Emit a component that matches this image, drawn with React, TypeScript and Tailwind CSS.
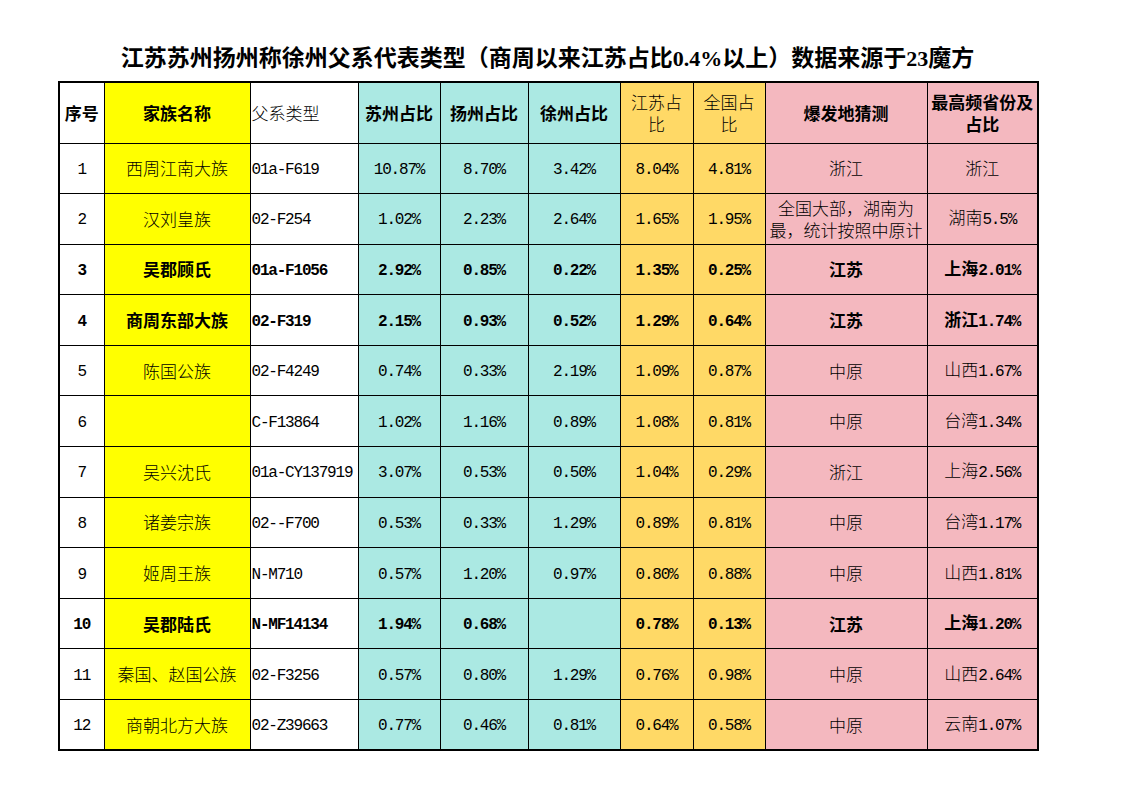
import React from "react";

type Row = {
  n: string;
  name: string;
  type: string;
  sz: string;
  yz: string;
  xz: string;
  js: string;
  qg: string;
  origin: React.ReactNode;
  top: string;
  bold?: boolean;
};

const rows: Row[] = [
  { n: "1", name: "西周江南大族", type: "01a-F619", sz: "10.87%", yz: "8.70%", xz: "3.42%", js: "8.04%", qg: "4.81%", origin: "浙江", top: "浙江" },
  {
    n: "2",
    name: "汉刘皇族",
    type: "02-F254",
    sz: "1.02%",
    yz: "2.23%",
    xz: "2.64%",
    js: "1.65%",
    qg: "1.95%",
    origin: (
      <span className="block leading-[22px]">
        全国大部，湖南为
        <br />
        最，统计按照中原计
      </span>
    ),
    top: "湖南5.5%",
  },
  { n: "3", name: "吴郡顾氏", type: "01a-F1056", sz: "2.92%", yz: "0.85%", xz: "0.22%", js: "1.35%", qg: "0.25%", origin: "江苏", top: "上海2.01%", bold: true },
  { n: "4", name: "商周东部大族", type: "02-F319", sz: "2.15%", yz: "0.93%", xz: "0.52%", js: "1.29%", qg: "0.64%", origin: "江苏", top: "浙江1.74%", bold: true },
  { n: "5", name: "陈国公族", type: "02-F4249", sz: "0.74%", yz: "0.33%", xz: "2.19%", js: "1.09%", qg: "0.87%", origin: "中原", top: "山西1.67%" },
  { n: "6", name: "", type: "C-F13864", sz: "1.02%", yz: "1.16%", xz: "0.89%", js: "1.08%", qg: "0.81%", origin: "中原", top: "台湾1.34%" },
  { n: "7", name: "吴兴沈氏", type: "01a-CY137919", sz: "3.07%", yz: "0.53%", xz: "0.50%", js: "1.04%", qg: "0.29%", origin: "浙江", top: "上海2.56%" },
  { n: "8", name: "诸姜宗族", type: "02--F700", sz: "0.53%", yz: "0.33%", xz: "1.29%", js: "0.89%", qg: "0.81%", origin: "中原", top: "台湾1.17%" },
  { n: "9", name: "姬周王族", type: "N-M710", sz: "0.57%", yz: "1.20%", xz: "0.97%", js: "0.80%", qg: "0.88%", origin: "中原", top: "山西1.81%" },
  { n: "10", name: "吴郡陆氏", type: "N-MF14134", sz: "1.94%", yz: "0.68%", xz: "", js: "0.78%", qg: "0.13%", origin: "江苏", top: "上海1.20%", bold: true },
  { n: "11", name: "秦国、赵国公族", type: "02-F3256", sz: "0.57%", yz: "0.80%", xz: "1.29%", js: "0.76%", qg: "0.98%", origin: "中原", top: "山西2.64%" },
  { n: "12", name: "商朝北方大族", type: "02-Z39663", sz: "0.77%", yz: "0.46%", xz: "0.81%", js: "0.64%", qg: "0.58%", origin: "中原", top: "云南1.07%" },
];

function T({ s }: { s: string }) {
  const parts = s.match(/[\u0000-\u00ff]+|[^\u0000-\u00ff]+/g) || [];
  return (
    <>
      {parts.map((p, i) =>
        /^[\u0000-\u00ff]+$/.test(p) ? (
          <span key={i} className="font-['Liberation_Mono',monospace] text-[16px] tracking-[-1.2px]">
            {p}
          </span>
        ) : (
          <span key={i}>{p}</span>
        )
      )}
    </>
  );
}

function Title({ s }: { s: string }) {
  const parts = s.match(/[\u0000-\u00ff]+|[^\u0000-\u00ff]+/g) || [];
  return (
    <>
      {parts.map((p, i) =>
        /^[\u0000-\u00ff]+$/.test(p) ? (
          <span key={i} className="font-['Liberation_Serif',serif] text-[22px] font-bold">
            {p}
          </span>
        ) : (
          <span key={i}>{p}</span>
        )
      )}
    </>
  );
}

const cell = "border border-black p-0 align-middle";
const yellow = "bg-[#ffff00]";
const teal = "bg-[#abe9e3]";
const gold = "bg-[#ffd966]";
const pink = "bg-[#f4b8bf]";

export default function App() {
  return (
    <div className="min-h-[800px] w-[1145px] bg-white font-['Noto_Sans_CJK_SC',sans-serif] text-black">
      <div className="ml-[58px] w-[979px] pt-[43px] pb-[9px] text-center text-[23px] font-bold leading-[26px]">
        <Title s="江苏苏州扬州称徐州父系代表类型（商周以来江苏占比0.4%以上）数据来源于23魔方" />
      </div>
      <table className="ml-[58px] w-[979px] table-fixed border-collapse border-2 border-black text-[17px] leading-[22px]">
        <colgroup>
          <col className="w-[45px]" />
          <col className="w-[146px]" />
          <col className="w-[108px]" />
          <col className="w-[82px]" />
          <col className="w-[88px]" />
          <col className="w-[92px]" />
          <col className="w-[73px]" />
          <col className="w-[72px]" />
          <col className="w-[162px]" />
          <col className="w-[111px]" />
        </colgroup>
        <thead>
          <tr className="h-[61px]">
            <th className={`${cell} bg-white text-center font-bold`}>序号</th>
            <th className={`${cell} ${yellow} text-center font-bold`}>家族名称</th>
            <th className={`${cell} bg-white pl-[1px] text-left font-light`}>父系类型</th>
            <th className={`${cell} ${teal} text-center font-bold`}>苏州占比</th>
            <th className={`${cell} ${teal} text-center font-bold`}>扬州占比</th>
            <th className={`${cell} ${teal} text-center font-bold`}>徐州占比</th>
            <th className={`${cell} ${gold} text-center font-light`}>
              <span className="block leading-[22px]">江苏占</span>
              <span className="block leading-[22px]">比</span>
            </th>
            <th className={`${cell} ${gold} text-center font-light`}>
              <span className="block leading-[22px]">全国占</span>
              <span className="block leading-[22px]">比</span>
            </th>
            <th className={`${cell} ${pink} text-center font-bold`}>爆发地猜测</th>
            <th className={`${cell} ${pink} text-center font-bold`}>
              <span className="block leading-[22px]">最高频省份及</span>
              <span className="block leading-[22px]">占比</span>
            </th>
          </tr>
        </thead>
        <tbody>
          {rows.map((r) => {
            const w = r.bold ? "font-bold" : "font-light";
            return (
              <tr key={r.n} className={`h-[50.6px] ${w}`}>
                <td className={`${cell} bg-white text-center`}>
                  <T s={r.n} />
                </td>
                <td className={`${cell} ${yellow} text-center`}>{r.name}</td>
                <td className={`${cell} bg-white pl-[1px] text-left whitespace-nowrap`}>
                  <T s={r.type} />
                </td>
                <td className={`${cell} ${teal} text-center`}>
                  <T s={r.sz} />
                </td>
                <td className={`${cell} ${teal} text-center`}>
                  <T s={r.yz} />
                </td>
                <td className={`${cell} ${teal} text-center`}>
                  <T s={r.xz} />
                </td>
                <td className={`${cell} ${gold} text-center`}>
                  <T s={r.js} />
                </td>
                <td className={`${cell} ${gold} text-center`}>
                  <T s={r.qg} />
                </td>
                <td className={`${cell} ${pink} text-center`}>{r.origin}</td>
                <td className={`${cell} ${pink} text-center`}>
                  <T s={r.top} />
                </td>
              </tr>
            );
          })}
        </tbody>
      </table>
    </div>
  );
}
